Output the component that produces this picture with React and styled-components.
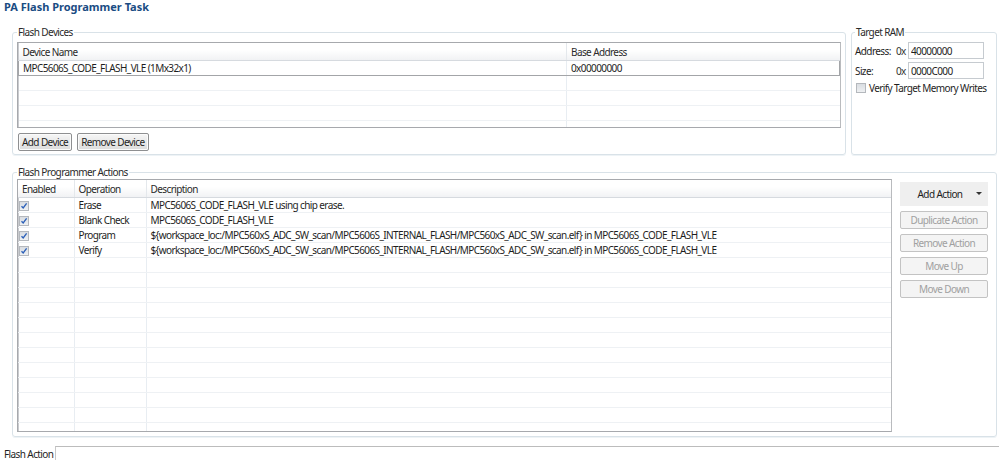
import React from 'react';
import styled, { createGlobalStyle } from 'styled-components';

const GlobalStyle = createGlobalStyle`
  html, body {
    margin: 0;
    padding: 0;
    background: #ffffff;
  }
  body {
    font-family: 'Noto Sans', 'Liberation Sans', sans-serif;
    font-size: 10px;
    letter-spacing: -0.6px;
    color: #1e1e1e;
  }
`;

const devices = [{ name: 'MPC5606S_CODE_FLASH_VLE (1Mx32x1)', address: '0x00000000' }];

const actions = [
  { op: 'Erase', desc: 'MPC5606S_CODE_FLASH_VLE using chip erase.' },
  { op: 'Blank Check', desc: 'MPC5606S_CODE_FLASH_VLE' },
  {
    op: 'Program',
    desc: '${workspace_loc:/MPC560xS_ADC_SW_scan/MPC5606S_INTERNAL_FLASH/MPC560xS_ADC_SW_scan.elf} in MPC5606S_CODE_FLASH_VLE',
  },
  {
    op: 'Verify',
    desc: '${workspace_loc:/MPC560xS_ADC_SW_scan/MPC5606S_INTERNAL_FLASH/MPC560xS_ADC_SW_scan.elf} in MPC5606S_CODE_FLASH_VLE',
  },
];

const CheckBox = ({ checked }) => (
  <Check>
    {checked && (
      <svg width='8' height='8' viewBox='0 0 8 8'>
        <path d='M1.5 4.2 L3.2 6 L6.6 1.4' fill='none' stroke='#2a5fb8' strokeWidth='1.3' />
      </svg>
    )}
  </Check>
);

const App = () => {
  const deviceFill = Array.from({ length: 4 });
  const actionFill = Array.from({ length: 12 });
  return (
    <>
      <GlobalStyle />
      <Page>
        <Title>PA Flash Programmer Task</Title>
        <TopRow>
          <Group grow>
            <Legend>Flash Devices</Legend>
            <TableBox height={86}>
              <Table>
                <colgroup>
                  <col style={{ width: 548 }} />
                  <col />
                </colgroup>
                <thead>
                  <tr>
                    <Th>Device Name</Th>
                    <Th>Base Address</Th>
                  </tr>
                </thead>
                <tbody>
                  {devices.map(d => (
                    <SelectedRow key={d.name}>
                      <Td>{d.name}</Td>
                      <Td>{d.address}</Td>
                    </SelectedRow>
                  ))}
                  {deviceFill.map((_, i) => (
                    <tr key={i}>
                      <Td />
                      <Td />
                    </tr>
                  ))}
                </tbody>
              </Table>
            </TableBox>
            <ButtonRow>
              <Button>Add Device</Button>
              <Button>Remove Device</Button>
            </ButtonRow>
          </Group>
          <Group width={146}>
            <Legend>Target RAM</Legend>
            <FieldRow>
              <FieldLabel>Address:</FieldLabel>
              <Prefix>0x</Prefix>
              <Input defaultValue='40000000' />
            </FieldRow>
            <FieldRow>
              <FieldLabel>Size:</FieldLabel>
              <Prefix>0x</Prefix>
              <Input defaultValue='0000C000' />
            </FieldRow>
            <CheckRow>
              <CheckBox />
              <span>Verify Target Memory Writes</span>
            </CheckRow>
          </Group>
        </TopRow>
        <Group actions>
          <Legend>Flash Programmer Actions</Legend>
          <ActionsBody>
            <TableBox height={253} grow>
              <Table>
                <colgroup>
                  <col style={{ width: 56 }} />
                  <col style={{ width: 72 }} />
                  <col />
                </colgroup>
                <thead>
                  <tr>
                    <Th>Enabled</Th>
                    <Th>Operation</Th>
                    <Th>Description</Th>
                  </tr>
                </thead>
                <tbody>
                  {actions.map(a => (
                    <tr key={a.op}>
                      <Td check>
                        <CheckBox checked />
                      </Td>
                      <Td>{a.op}</Td>
                      <Td>{a.desc}</Td>
                    </tr>
                  ))}
                  {actionFill.map((_, i) => (
                    <tr key={i}>
                      <Td />
                      <Td />
                      <Td />
                    </tr>
                  ))}
                </tbody>
              </Table>
            </TableBox>
            <SideButtons>
              <DropButton>
                <span>Add Action</span>
                <Caret />
              </DropButton>
              <SideButton disabled>Duplicate Action</SideButton>
              <SideButton disabled>Remove Action</SideButton>
              <SideButton disabled>Move Up</SideButton>
              <SideButton disabled>Move Down</SideButton>
            </SideButtons>
          </ActionsBody>
        </Group>
        <Footer>
          <FooterLabel>Flash Action</FooterLabel>
          <FooterBox />
        </Footer>
      </Page>
    </>
  );
};

export default App;

const Page = styled.div`
  width: 999px;
  height: 460px;
  overflow: hidden;
  padding: 0 2px 0 4px;
  box-sizing: border-box;
  display: flex;
  flex-direction: column;
`;

const Title = styled.div`
  font-size: 11px;
  font-weight: 700;
  letter-spacing: 0;
  color: #1a4c83;
  line-height: 13px;
  height: 13px;
`;

const TopRow = styled.div`
  display: flex;
  gap: 5px;
  margin: 13px 0 0 8px;
`;

const Group = styled.fieldset`
  margin: ${p => (p.actions ? '11px 0 0 8px' : '0')};
  padding: 4px 4px 3px 4px;
  border: 1px solid #d9e2e8;
  border-radius: 3px;
  box-shadow: 0 1px 0 #eef3f6;
  min-width: 0;
  flex: ${p => (p.grow ? '1' : 'none')};
  width: ${p => (p.width ? `${p.width}px` : 'auto')};
  box-sizing: border-box;
  ${p => p.width && 'padding: 4px 3px 3px 3px;'}
  ${p => p.actions && 'padding: 1px 8px 4px 4px;'}
`;

const Legend = styled.legend`
  padding: 0 1px;
  margin-left: 0;
  font-size: 10px;
  line-height: 12px;
  color: #2a2a2a;
`;

const TableBox = styled.div`
  height: ${p => p.height}px;
  flex: ${p => (p.grow ? '1' : 'none')};
  border: 1px solid #a7a9ad;
  border-right-color: #b9bbbe;
  box-shadow: inset 1px 1px 0 #c9cbcf;
  overflow: hidden;
  box-sizing: border-box;
  background: #fff;
`;

const Table = styled.table`
  width: 100%;
  border-collapse: collapse;
  table-layout: fixed;
`;

const Th = styled.th`
  height: 17px;
  padding: 0 0 0 4px;
  font-weight: 400;
  text-align: left;
  color: #2a2a2a;
  background: linear-gradient(#ffffff, #ffffff 40%, #f1f2f4);
  border-right: 1px solid #e4e8ec;
  border-bottom: 1px solid #d6dadf;
  white-space: nowrap;
  overflow: hidden;
  &:last-child {
    border-right: none;
  }
`;

const Td = styled.td`
  height: 14px;
  padding: 0 0 0 ${p => (p.check ? '1px' : '4px')};
  border-right: 1px solid #e8edf2;
  border-bottom: 1px solid #eef1f4;
  white-space: nowrap;
  overflow: hidden;
  color: #1e1e1e;
  line-height: 14px;
  &:last-child {
    border-right: none;
  }
`;

const SelectedRow = styled.tr`
  td {
    border-top: 1px solid #a3a5a8;
    border-bottom: 1px solid #a3a5a8;
  }
  td:first-child {
    border-left: 1px solid #a3a5a8;
  }
  td:last-child {
    border-right: 1px solid #a3a5a8;
  }
`;

const ButtonRow = styled.div`
  display: flex;
  gap: 5px;
  margin-top: 5px;
  padding-left: 1px;
`;

const Button = styled.button`
  height: 18px;
  padding: 0 3px;
  font-family: inherit;
  font-size: 10px;
  letter-spacing: inherit;
  color: #1e1e1e;
  border: 1px solid #8e8f91;
  border-radius: 2px;
  background: linear-gradient(#f6f6f6, #e9e9e9 50%, #dcdcdc);
  box-shadow: inset 0 0 0 1px #fbfbfb;
`;

const FieldRow = styled.div`
  display: flex;
  align-items: center;
  height: 17px;
  margin-bottom: 3px;
  white-space: nowrap;
`;

const FieldLabel = styled.span`
  width: 41px;
`;

const Prefix = styled.span`
  width: 12px;
  color: #333;
`;

const Input = styled.input`
  width: 76px;
  height: 17px;
  box-sizing: border-box;
  border: 1px solid #c6cbd0;
  padding: 0 2px;
  font-family: inherit;
  font-size: 10px;
  letter-spacing: inherit;
  color: #1e1e1e;
  outline: none;
`;

const CheckRow = styled.div`
  display: flex;
  align-items: center;
  gap: 3px;
  margin-left: 1px;
  height: 12px;
  white-space: nowrap;
`;

const Check = styled.span`
  display: inline-flex;
  align-items: center;
  justify-content: center;
  flex: none;
  width: 10px;
  height: 10px;
  box-sizing: border-box;
  border: 1px solid #b4b8bd;
  background: linear-gradient(#d9dde2, #eef0f2);
  vertical-align: middle;
`;

const ActionsBody = styled.div`
  display: flex;
  gap: 8px;
`;

const SideButtons = styled.div`
  width: 88px;
  display: flex;
  flex-direction: column;
  gap: 5px;
  padding-top: 3px;
`;

const DropButton = styled.div`
  height: 24px;
  background: #efefef;
  display: flex;
  align-items: center;
  justify-content: center;
  position: relative;
  color: #1e1e1e;
  span {
    margin-right: 8px;
  }
`;

const Caret = styled.i`
  position: absolute;
  right: 6px;
  top: 10px;
  border-left: 3px solid transparent;
  border-right: 3px solid transparent;
  border-top: 3px solid #333;
`;

const SideButton = styled.button`
  height: 18px;
  font-family: inherit;
  font-size: 10px;
  letter-spacing: inherit;
  color: #a0a0a0;
  border: 1px solid #c3c3c3;
  border-radius: 2px;
  background: #f4f4f4;
  padding: 0;
`;

const Footer = styled.div`
  display: flex;
  align-items: flex-start;
  margin-top: 9px;
  flex: 1;
`;

const FooterLabel = styled.span`
  width: 51px;
  padding-top: 2px;
  line-height: 12px;
  white-space: nowrap;
  color: #1e1e1e;
`;

const FooterBox = styled.div`
  flex: 1;
  height: 20px;
  border-top: 1px solid #bcbcbc;
  border-left: 1px solid #c8c8c8;
  margin-right: -2px;
`;
